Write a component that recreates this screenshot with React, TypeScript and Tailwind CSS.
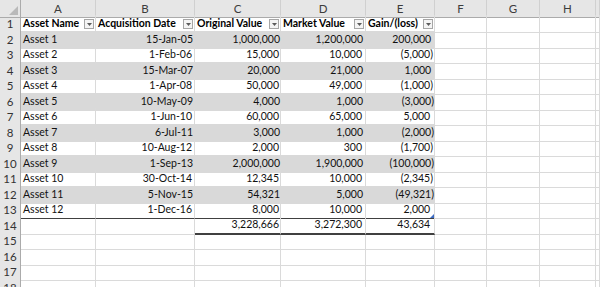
import type { ReactNode } from 'react';

const GRID =
  'grid grid-cols-[21px_75px_99px_86px_85px_69px_52px_53px_56px_1fr]';

const LETTERS = ['A', 'B', 'C', 'D', 'E', 'F', 'G', 'H', ''];

const HEADERS = [
  'Asset Name',
  'Acquisition Date',
  'Original Value',
  'Market Value',
  'Gain/(loss)',
];

const ASSETS = [
  ['Asset 1', '15-Jan-05', '1,000,000', '1,200,000', '200,000'],
  ['Asset 2', '1-Feb-06', '15,000', '10,000', '(5,000)'],
  ['Asset 3', '15-Mar-07', '20,000', '21,000', '1,000'],
  ['Asset 4', '1-Apr-08', '50,000', '49,000', '(1,000)'],
  ['Asset 5', '10-May-09', '4,000', '1,000', '(3,000)'],
  ['Asset 6', '1-Jun-10', '60,000', '65,000', '5,000'],
  ['Asset 7', '6-Jul-11', '3,000', '1,000', '(2,000)'],
  ['Asset 8', '10-Aug-12', '2,000', '300', '(1,700)'],
  ['Asset 9', '1-Sep-13', '2,000,000', '1,900,000', '(100,000)'],
  ['Asset 10', '30-Oct-14', '12,345', '10,000', '(2,345)'],
  ['Asset 11', '5-Nov-15', '54,321', '5,000', '(49,321)'],
  ['Asset 12', '1-Dec-16', '8,000', '10,000', '2,000'],
];

// excel rows here are 15.5px on average, so alternate 16 / 15
const rowHeight = (n: number) => (n % 2 === 1 ? 'h-[16px]' : 'h-[15px]');

const gridCell = 'border-r border-b border-[#dadada]';

const RowNumber = ({ n }: { n: number }) => (
  <div className="flex items-center justify-center border-r border-b border-r-[#ababab] border-b-[#d4d4d4] bg-[#e6e6e6] text-[11.5px] text-[#333]">
    {n}
  </div>
);

const EmptyCells = ({ count }: { count: number }) => (
  <>
    {Array.from({ length: count }).map((_, i) => (
      <div key={i} className={gridCell} />
    ))}
  </>
);

const FilterButton = () => (
  <span className="mr-px ml-auto flex h-[10px] w-[10px] shrink-0 items-center justify-center border border-[#a6a6a6] bg-[#f4f4f4]">
    <svg width="5" height="3" viewBox="0 0 5 3">
      <path d="M0 0h5L2.5 3z" fill="#5a5a5a" />
    </svg>
  </span>
);

// accounting style: positives keep room for the closing paren
const Gain = ({ value }: { value: string }) =>
  value.startsWith('(') ? (
    <>{value}</>
  ) : (
    <>
      {value}
      <span className="invisible">)</span>
    </>
  );

const Cell = ({
  children,
  className = '',
}: {
  children?: ReactNode;
  className?: string;
}) => (
  <div className={`relative flex items-center overflow-visible whitespace-nowrap ${className}`}>
    {children}
  </div>
);

const App = () => {
  return (
    <div className="h-[287px] w-[600px] overflow-hidden bg-white font-[Lato,sans-serif] text-[10.5px] text-[#111]">
      {/* column letters */}
      <div className={`${GRID} h-[15px] text-[11.5px] text-[#3c3c3c]`}>
        <div className="relative border-r border-b border-r-[#ababab] border-b-[#ababab] bg-[#e6e6e6]">
          <span className="absolute right-[2px] bottom-[2px] h-0 w-0 border-b-[9px] border-l-[9px] border-b-[#b9b9b9] border-l-transparent" />
        </div>
        {LETTERS.map((l, i) => (
          <div
            key={i}
            className="flex items-center justify-center border-r border-b border-r-[#d0d0d0] border-b-[#ababab] bg-[#e6e6e6]"
          >
            {l}
          </div>
        ))}
      </div>

      {/* row 1: table headers */}
      <div className={`${GRID} ${rowHeight(1)}`}>
        <RowNumber n={1} />
        {HEADERS.map((h) => (
          <Cell key={h} className="border-r border-[#dadada] pl-[2px] font-bold text-black">
            {h}
            <FilterButton />
          </Cell>
        ))}
        <EmptyCells count={4} />
      </div>

      {/* rows 2-13: assets */}
      {ASSETS.map((a, i) => {
        const n = i + 2;
        const banded = n % 2 === 0;
        const last = n === 13;
        const base = banded
          ? 'bg-[#d9d9d9]'
          : last
            ? 'border-r border-b border-r-[#dadada] border-b-[#404040]'
            : 'border-r border-[#dadada]';
        return (
          <div key={a[0]} className={`${GRID} ${rowHeight(n)}`}>
            <RowNumber n={n} />
            <Cell className={`${base} pl-[2px]`}>{a[0]}</Cell>
            <Cell className={`${base} justify-end pr-[2px]`}>{a[1]}</Cell>
            <Cell className={`${base} justify-end pr-[1px]`}>{a[2]}</Cell>
            <Cell className={`${base} justify-end pr-[3px]`}>{a[3]}</Cell>
            <Cell className={`${base} justify-end pr-[1px]`}>
              <Gain value={a[4]} />
              {last && (
                <span className="absolute right-0 bottom-0 h-0 w-0 border-b-[4px] border-l-[4px] border-b-[#3b6bc4] border-l-transparent" />
              )}
            </Cell>
            <EmptyCells count={4} />
          </div>
        );
      })}

      {/* row 14: totals */}
      <div className={`${GRID} ${rowHeight(14)}`}>
        <RowNumber n={14} />
        <div className={gridCell} />
        <div className={gridCell} />
        <Cell className="justify-end border-r border-b-2 border-r-[#dadada] border-b-[#404040] pr-[1px]">
          3,228,666
        </Cell>
        <Cell className="justify-end border-r border-b-2 border-r-[#dadada] border-b-[#404040] pr-[3px]">
          3,272,300
        </Cell>
        <Cell className="justify-end border-r border-b-2 border-r-[#dadada] border-b-[#404040] pr-[1px]">
          <Gain value="43,634" />
        </Cell>
        <EmptyCells count={4} />
      </div>

      {/* empty rows */}
      {[15, 16, 17, 18].map((n) => (
        <div key={n} className={`${GRID} ${rowHeight(n)}`}>
          <RowNumber n={n} />
          <EmptyCells count={9} />
        </div>
      ))}
    </div>
  );
};

export default App;
